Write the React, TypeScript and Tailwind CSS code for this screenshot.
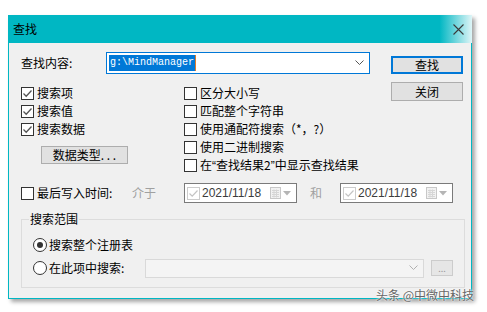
import type {ReactNode} from 'react';

const ui = '"Noto Sans CJK SC", "Noto Sans", sans-serif';

function CheckBox({checked = false}: {checked?: boolean}) {
  return (
    <span className="flex h-[13px] w-[13px] shrink-0 items-center justify-center border border-[#333333] bg-white">
      {checked ? (
        <svg width="11" height="11" viewBox="0 0 11 11">
          <path d="M1.5 5.5 L4.2 8.2 L9.5 2.5" fill="none" stroke="#555555" strokeWidth="1.3" />
        </svg>
      ) : null}
    </span>
  );
}

function CheckRow({checked, children}: {checked?: boolean; children: ReactNode}) {
  return (
    <div className="flex h-[18px] items-center gap-[3px]">
      <CheckBox checked={checked} />
      <span className="whitespace-nowrap">{children}</span>
    </div>
  );
}

function Radio({checked = false}: {checked?: boolean}) {
  return (
    <span className="flex h-[14px] w-[14px] shrink-0 items-center justify-center rounded-full border border-[#333333] bg-white">
      {checked ? <span className="h-[6px] w-[6px] rounded-full bg-[#333333]" /> : null}
    </span>
  );
}

function DateBox() {
  return (
    <div className="flex h-[20px] w-[113px] items-center border border-[#7a7a7a] bg-white pl-[2px]">
      <span className="flex h-[13px] w-[13px] items-center justify-center border border-[#cccccc]">
        <svg width="11" height="11" viewBox="0 0 11 11">
          <path d="M1.5 5.5 L4.2 8.2 L9.5 2.5" fill="none" stroke="#c4c4c4" strokeWidth="1.2" />
        </svg>
      </span>
      <span className="ml-[2px] text-[12px] leading-none text-[#3c3c3c]" style={{fontFamily: '"Liberation Sans", Arial, sans-serif'}}>
        2021/11/18
      </span>
      <svg className="ml-[9px]" width="11" height="12" viewBox="0 0 11 12">
        <rect x="0.5" y="0.5" width="10" height="11" fill="#f2f2f2" stroke="#c8c8c8" />
        <path d="M2 3.5 H9 M2 5.5 H9 M2 7.5 H9 M2 9.5 H9 M4 2.5 V10.5 M6.5 2.5 V10.5" stroke="#d6d6d6" />
      </svg>
      <svg className="ml-[2px]" width="8" height="5" viewBox="0 0 8 5">
        <path d="M0 0 H8 L4 4.5 Z" fill="#b5b5b5" />
      </svg>
    </div>
  );
}

// half-width quotes, as the original dialog draws them
function Quote({children}: {children: ReactNode}) {
  return <span style={{fontFamily: '"Liberation Sans", Arial, sans-serif'}}>{children}</span>;
}

export default function App() {
  return (
    <div className="relative h-[312px] w-[487px] overflow-hidden bg-white text-[12px] text-black" style={{fontFamily: ui}}>
      <div className="ml-[8px] mt-[15px] w-[464px] shadow-[3px_3px_4px_rgba(0,0,0,0.35)]">
        <div className="flex h-[28px] items-center justify-between bg-[linear-gradient(to_right,#00b7c3_93%,#dff5f7)] pl-[5px] pr-[8px]">
          <span className="text-[12px]">查找</span>
          <svg width="11" height="11" viewBox="0 0 11 11">
            <path d="M0.5 0.5 L10.5 10.5 M10.5 0.5 L0.5 10.5" stroke="#3a3a3a" strokeWidth="1.1" />
          </svg>
        </div>

        <div className="flex h-[256px] flex-col border-x border-b border-[#00b7c3] bg-[#f0f0f0] pl-[12px] pt-[9px]">
          <div className="flex">
            <div className="w-[349px]">
              <div className="flex h-[22px] items-center">
                <span className="w-[85px]">查找内容:</span>
                <div className="flex h-[22px] w-[264px] items-center border border-[#0078d7] bg-white pl-[2px] pr-[5px]">
                  <span
                    className="bg-[#0078d7] px-[1px] text-[10px] leading-[16px] text-white"
                    style={{fontFamily: '"Liberation Mono", "Courier New", monospace'}}
                  >
                    g:\MindManager
                  </span>
                  <span className="h-[16px] w-[1px] bg-[#e07b2c]" />
                  <svg className="ml-auto" width="9" height="6" viewBox="0 0 9 6">
                    <path d="M0.5 0.5 L4.5 4.5 L8.5 0.5" fill="none" stroke="#555555" />
                  </svg>
                </div>
              </div>

              <div className="mt-[10px] flex">
                <div className="w-[163px]">
                  <CheckRow checked>搜索项</CheckRow>
                  <CheckRow checked>搜索值</CheckRow>
                  <CheckRow checked>搜索数据</CheckRow>
                  <button
                    type="button"
                    className="ml-[20px] mt-[8px] flex h-[18px] w-[87px] items-center justify-center border border-[#adadad] bg-[#e1e1e1] leading-none"
                  >
                    数据类型. . .
                  </button>
                </div>
                <div>
                  <CheckRow>区分大小写</CheckRow>
                  <CheckRow>匹配整个字符串</CheckRow>
                  <CheckRow>使用通配符搜索（*，?）</CheckRow>
                  <CheckRow>使用二进制搜索</CheckRow>
                  <CheckRow>
                    在<Quote>“</Quote>查找结果2<Quote>”</Quote>中显示查找结果
                  </CheckRow>
                </div>
              </div>
            </div>

            <div className="ml-[21px] flex flex-col pt-[4px]">
              <button type="button" className="flex h-[18px] w-[72px] items-center justify-center border-2 border-[#0078d7] bg-[#e1e1e1] leading-none">
                查找
              </button>
              <button type="button" className="mt-[8px] flex h-[19px] w-[72px] items-center justify-center border border-[#adadad] bg-[#e1e1e1] leading-none">
                关闭
              </button>
            </div>
          </div>

          <div className="mt-[9px] flex h-[20px] items-center">
            <div className="flex w-[111px] items-center gap-[3px]">
              <CheckBox />
              <span>最后写入时间:</span>
            </div>
            <span className="w-[52px] text-[#a0a0a0]">介于</span>
            <DateBox />
            <span className="w-[43px] pl-[13px] text-[#a0a0a0]">和</span>
            <DateBox />
          </div>

          <fieldset className="mt-[8px] w-[444px] border border-[#dcdcdc] px-[7px] pb-[9px]">
            <legend className="px-[1px] leading-[16px]">搜索范围</legend>
            <div className="ml-[4px] mt-[9px] flex h-[18px] items-center gap-[2px]">
              <Radio checked />
              <span>搜索整个注册表</span>
            </div>
            <div className="ml-[4px] mt-[4px] flex h-[20px] items-center">
              <div className="flex w-[112px] items-center gap-[2px]">
                <Radio />
                <span>在此项中搜索:</span>
              </div>
              <div className="flex h-[19px] w-[279px] items-center border border-[#d9d9d9] bg-[#f4f4f4] pr-[5px]">
                <svg className="ml-auto" width="9" height="6" viewBox="0 0 9 6">
                  <path d="M0.5 0.5 L4.5 4.5 L8.5 0.5" fill="none" stroke="#b0b0b0" />
                </svg>
              </div>
              <div className="ml-[7px] flex h-[16px] w-[22px] items-center justify-center border border-[#cccccc] bg-[#e6e6e6] text-[9px] leading-none text-[#9a9a9a]">
                ...
              </div>
            </div>
          </fieldset>
        </div>
      </div>

      <span className="absolute left-[376px] top-[289px] text-[12px] leading-none text-[#666666] [text-shadow:0_0_2px_#ffffff,0_0_2px_#ffffff]">
        头条 @中微中科技
      </span>
    </div>
  );
}
